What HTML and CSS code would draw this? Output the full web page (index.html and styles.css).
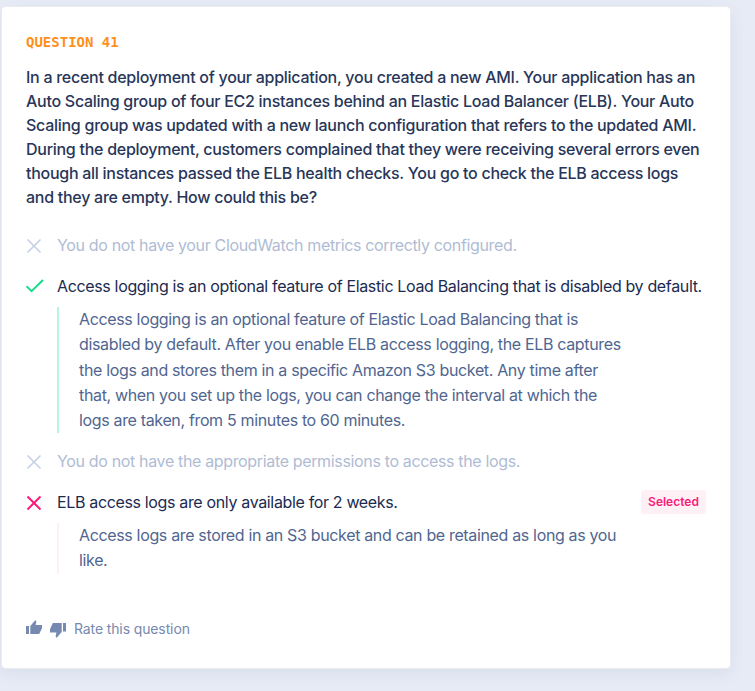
FILE: index.html
```html
<!DOCTYPE html>
<html lang="en">
<head>
<meta charset="utf-8">
<title>Question 41</title>
<link rel="stylesheet" href="styles.css">
</head>
<body>
<main class="card">
  <div class="eyebrow">QUESTION 41</div>
  <h1 class="question">In a recent deployment of your application, you created a new AMI. Your application has an<br>Auto Scaling group of four EC2 instances behind an Elastic Load Balancer (ELB). Your Auto<br>Scaling group was updated with a new launch configuration that refers to the updated AMI.<br>During the deployment, customers complained that they were receiving several errors even<br>though all instances passed the ELB health checks. You go to check the ELB access logs<br>and they are empty. How could this be?</h1>
  <ul class="answers">
    <li class="answer muted">
      <svg class="mark" viewBox="0 0 18 18"><path d="M1.5 2.5l13 13M14.5 2.5l-13 13"/></svg>
      <p class="label">You do not have your CloudWatch metrics correctly configured.</p>
    </li>
    <li class="answer correct">
      <svg class="mark" viewBox="0 0 18 18"><path d="M.5 8.2l5 5L17 2"/></svg>
      <p class="label">Access logging is an optional feature of Elastic Load Balancing that is disabled by default.</p>
      <p class="explanation">Access logging is an optional feature of Elastic Load Balancing that is<br>disabled by default. After you enable ELB access logging, the ELB captures<br>the logs and stores them in a specific Amazon S3 bucket. Any time after<br>that, when you set up the logs, you can change the interval at which the<br>logs are taken, from 5 minutes to 60 minutes.</p>
    </li>
    <li class="answer muted">
      <svg class="mark" viewBox="0 0 18 18"><path d="M1.5 2.5l13 13M14.5 2.5l-13 13"/></svg>
      <p class="label">You do not have the appropriate permissions to access the logs.</p>
    </li>
    <li class="answer wrong">
      <svg class="mark" viewBox="0 0 18 18"><path d="M1.5 2.5l13 13M14.5 2.5l-13 13"/></svg>
      <p class="label">ELB access logs are only available for 2 weeks.</p>
      <span class="badge">Selected</span>
      <p class="explanation">Access logs are stored in an S3 bucket and can be retained as long as you<br>like.</p>
    </li>
  </ul>
  <footer class="rate">
    <svg class="thumb" viewBox="0 0 16 18"><path d="M0 6h3v8H0zM4.3 6L9.3.3q1.2.4 1 1.7L9.6 5H16v3.2L13.2 14H4.3z"/></svg>
    <svg class="thumb" viewBox="0 0 16 18"><path d="M13 3h3v8.5h-3zM11.7 12L6.7 17.7q-1.2-.4-1-1.7l.7-3.5H0V9.300L2.800 3h8.900z"/></svg>
    <span class="rate-text">Rate this question</span>
  </footer>
</main>
</body>
</html>
```
FILE: styles.css
```css
* { box-sizing: border-box; }
body {
  margin: 0;
  padding: 7px 0 0 2px;
  height: 691px;
  overflow: hidden;
  background: #e7ebf6;
  font-family: Inter, "Liberation Sans", sans-serif;
}
.card {
  width: 728px;
  height: 661px;
  padding: 23px 24px;
  background: #fff;
  border-radius: 4px;
  box-shadow: 0 0 1px 1px #ebecf0, 0 5px 15px rgba(80, 102, 144, .1);
}
.eyebrow {
  color: #ff8f1c;
  font: bold 14px/24px "DejaVu Sans Mono", monospace;
}
.question {
  margin: 11px 0 0;
  color: #283659;
  font-size: 16px;
  font-weight: 500;
  line-height: 24px;
  letter-spacing: -.272px;
  white-space: nowrap;
}
.answers { list-style: none; margin: 24px 0 0; padding: 0; }
.answer {
  display: grid;
  grid-template-columns: 31px 1fr auto;
  margin-bottom: 17px;
}
.mark {
  width: 18px;
  height: 18px;
  margin-top: 4px;
  fill: none;
  stroke: #c5cfe5;
  stroke-width: 1.6;
}
.label {
  margin: 0;
  font-size: 16px;
  line-height: 24px;
  letter-spacing: -.347px;
  color: #1b2b50;
  white-space: nowrap;
}
.muted .label { color: #afbcd4; }
.correct { margin-bottom: 15.8px; }
.correct .mark { stroke: #15db8b; stroke-width: 2; }
.wrong .mark { stroke: #fa1c78; stroke-width: 2; }
.explanation {
  grid-column: 2 / 4;
  margin: 9.2px 0 0;
  padding-left: 20px;
  border-left: 2px solid #b9f4dc;
  color: #506690;
  font-size: 16px;
  line-height: 25.2px;
  letter-spacing: -.345px;
  white-space: nowrap;
}
.wrong .explanation { border-color: #fff0f5; }
.badge {
  width: 65px;
  height: 24px;
  border-radius: 3px;
  background: #fff0f6;
  color: #fa1c78;
  font-size: 12px;
  font-weight: 600;
  line-height: 24px;
  text-align: center;
}
.rate {
  display: flex;
  align-items: center;
  gap: 8px;
  height: 24px;
  margin-top: 43px;
  color: #7689b0;
}
.thumb { width: 16px; height: 18px; fill: #7689b0; }
.rate-text { font-size: 14px; letter-spacing: -.12px; }
```
